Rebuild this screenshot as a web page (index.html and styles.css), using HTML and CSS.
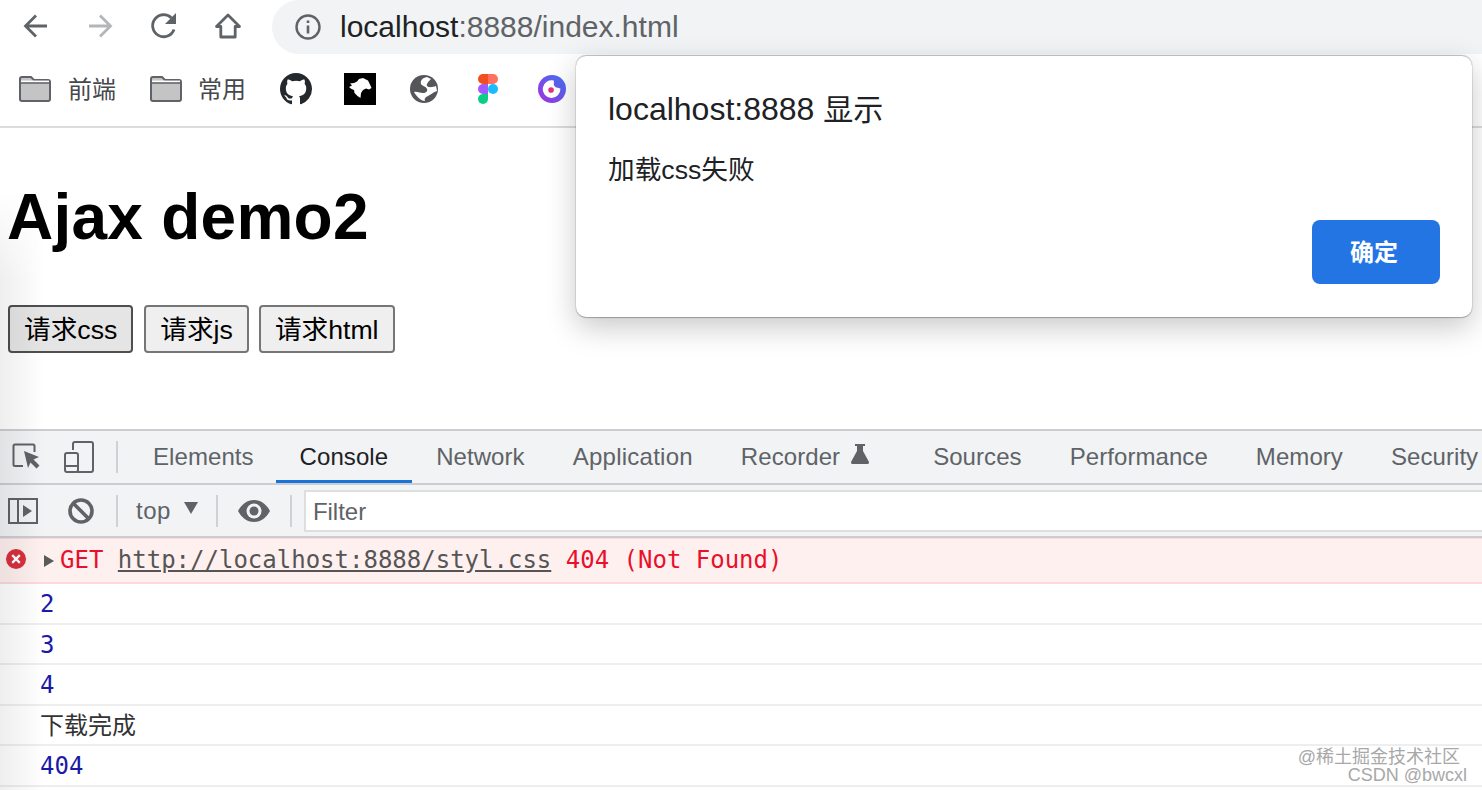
FILE: index.html
```html
<!DOCTYPE html>
<html lang="zh">
<head>
<meta charset="utf-8">
<title>Ajax demo2</title>
<link rel="stylesheet" href="styles.css">
</head>
<body>
<div class="browser">
  <header class="toolbar">
    <svg class="nav nav-back" viewBox="0 0 28 28"><path d="M25 14H4M14 3.500 3.500 14 14 24.500" fill="none" stroke="#5f6368" stroke-width="2.800"/></svg>
    <svg class="nav nav-fwd" viewBox="0 0 28 28"><path d="M3 14h21M14 3.500 24.500 14 14 24.500" fill="none" stroke="#b4b6b9" stroke-width="2.800"/></svg>
    <svg class="nav nav-reload" viewBox="0 0 28 28"><path d="M24 17.500A11 11 0 1 1 21.500 6" fill="none" stroke="#5f6368" stroke-width="2.800"/><path d="M26 1v11H15z" fill="#5f6368"/></svg>
    <svg class="nav nav-home" viewBox="0 0 28 28"><path d="M14 3 2.500 14.500h4.300V25h14.400V14.500h4.300z" fill="none" stroke="#5f6368" stroke-width="2.800" stroke-linejoin="round"/></svg>
    <div class="omnibox">
      <svg class="info" viewBox="0 0 28 28"><circle cx="14" cy="14" r="11.500" fill="none" stroke="#5f6368" stroke-width="2.400"/><path d="M12.700 12.500h2.600v8h-2.600zM12.700 7.500h2.600v2.600h-2.600z" fill="#5f6368"/></svg>
      <span class="url">localhost<span class="url-rest">:8888/index.html</span></span>
    </div>
  </header>

  <nav class="bookmarks">
    <div class="mark mark-folder">
      <svg class="folder" viewBox="0 0 32 26"><path d="M1 3q0-2 2-2h9l3 3h14q2 0 2 2v17q0 2-2 2H3q-2 0-2-2z" fill="#c4c4c4" stroke="#5f6368" stroke-width="2"/><path d="M1 7h30" stroke="#5f6368" stroke-width="1.500"/><path d="M2 5.300h28" stroke="#fff" stroke-width="1.500"/></svg>
      <span class="mark-label">前端</span>
    </div>
    <div class="mark mark-folder">
      <svg class="folder" viewBox="0 0 32 26"><path d="M1 3q0-2 2-2h9l3 3h14q2 0 2 2v17q0 2-2 2H3q-2 0-2-2z" fill="#c4c4c4" stroke="#5f6368" stroke-width="2"/><path d="M1 7h30" stroke="#5f6368" stroke-width="1.500"/><path d="M2 5.300h28" stroke="#fff" stroke-width="1.500"/></svg>
      <span class="mark-label">常用</span>
    </div>
    <svg class="fav fav-github" viewBox="0 0 16 16"><path fill="#24292e" d="M8 0C3.580 0 0 3.580 0 8c0 3.540 2.290 6.530 5.470 7.590.4.070.55-.17.55-.38 0-.19-.01-.82-.01-1.490-2.010.37-2.530-.49-2.690-.94-.09-.23-.48-.94-.82-1.130-.28-.15-.68-.52-.01-.53.63-.01 1.080.58 1.230.82.72 1.210 1.870.87 2.330.66.07-.52.28-.87.51-1.070-1.780-.2-3.640-.89-3.640-3.950 0-.87.31-1.590.82-2.150-.08-.2-.36-1.020.08-2.120 0 0 .67-.21 2.200.82.64-.18 1.320-.27 2-.27.68 0 1.360.09 2 .27 1.530-1.040 2.200-.82 2.200-.82.44 1.100.16 1.920.08 2.120.51.56.82 1.270.82 2.150 0 3.070-1.870 3.750-3.650 3.950.29.25.54.73.54 1.480 0 1.070-.01 1.930-.01 2.200 0 .21.15.46.55.38A8.013 8.013 0 0 0 16 8c0-4.420-3.580-8-8-8z"/></svg>
    <svg class="fav fav-lion" viewBox="0 0 32 32"><rect width="32" height="32" fill="#000"/><path d="M5 14l3-1.500-2-2 4-.5 3-1.500 2-2.500 4-1 5 2.500 2 4 1.500 3.500-2.500 1.500-3-1-3 1.500-2 3-.5 5-3-2-3-3-.5-3-2.500-1z" fill="#fff"/></svg>
    <svg class="fav fav-globe" viewBox="0 0 28 28"><circle cx="14" cy="14" r="14" fill="#54565a"/><path d="M17 2c-5 1-7 4-6 7 1 2 5 2 6 5 1 2-1 4-4 4-3 0-6-2-9-1 2 4 7 9 11 9-1-2 0-4 3-5 4-2 5-4 9-5l-1-5c-3 1-7 2-9 0-1-2 2-5 4-7z" fill="#fff"/></svg>
    <svg class="fav fav-figma" viewBox="0 0 20 30"><path d="M5 0h5v10H5a5 5 0 0 1 0-10z" fill="#f24e1e"/><path d="M10 0h5a5 5 0 0 1 0 10h-5z" fill="#ff7262"/><path d="M5 10h5v10H5a5 5 0 0 1 0-10z" fill="#a259ff"/><circle cx="15" cy="15" r="5" fill="#1abcfe"/><path d="M5 20h5v5a5 5 0 1 1-5-5z" fill="#0acf83"/></svg>
    <svg class="fav fav-orbit" viewBox="0 0 30 30"><defs><linearGradient id="orbit" x1="0" y1="1" x2="1" y2="0"><stop offset="0" stop-color="#a62ee0"/><stop offset="1" stop-color="#3a78f2"/></linearGradient></defs><circle cx="15" cy="15" r="15" fill="url(#orbit)"/><path d="M17 6a9.500 9.500 0 1 0 7 8.500l-5-1.500-2-2z" fill="#fff"/><circle cx="14" cy="16" r="3" fill="#e0327c"/></svg>
  </nav>

  <main class="page">
    <h1 class="title">Ajax demo2</h1>
    <div class="buttons">
      <button class="btn btn-focus" type="button">请求css</button>
      <button class="btn" type="button">请求js</button>
      <button class="btn btn-last" type="button">请求html</button>
    </div>
  </main>

  <section class="devtools">
    <div class="tabbar">
      <svg class="dt-icon dt-inspect" viewBox="0 0 30 28"><path d="M11 23H3q-1.500 0-1.500-1.500V3Q1.500 1.500 3 1.500h18q1.500 0 1.500 1.500v6" fill="none" stroke="#5f6368" stroke-width="2"/><path d="M12 8l15 6-5.500 2.500 6 6-3 3-6-6L16 25z" fill="#5f6368"/></svg>
      <svg class="dt-icon dt-device" viewBox="0 0 30 32"><path d="M9 9V3q0-2 2-2h16q2 0 2 2v26q0 2-2 2H13" fill="none" stroke="#5f6368" stroke-width="2"/><rect x="1" y="12" width="13" height="19" rx="2" fill="none" stroke="#5f6368" stroke-width="2"/><path d="M2 25h11" stroke="#5f6368" stroke-width="2"/></svg>
      <i class="sep sep-tab"></i>
      <span class="tab tab-first">Elements</span>
      <span class="tab tab-active">Console</span>
      <span class="tab">Network</span>
      <span class="tab tab-wide">Application</span>
      <span class="tab tab-flask">Recorder
        <svg class="flask" viewBox="0 0 20 20"><path d="M5 0h10v2h-2v5l6 11q.5 2-1.500 2h-15q-2 0-1.500-2L7 7V2H5z" fill="#5f6368"/></svg>
      </span>
      <span class="tab">Sources</span>
      <span class="tab">Performance</span>
      <span class="tab">Memory</span>
      <span class="tab">Security</span>
    </div>

    <div class="consolebar">
      <svg class="dt-icon dt-side" viewBox="0 0 30 26"><rect x="1" y="1" width="28" height="24" fill="none" stroke="#5f6368" stroke-width="2"/><path d="M10 1v24" stroke="#5f6368" stroke-width="2"/><path d="M15 7l9 6-9 6z" fill="#5f6368"/></svg>
      <svg class="dt-icon dt-ban" viewBox="0 0 26 26"><circle cx="13" cy="13" r="11" fill="none" stroke="#5f6368" stroke-width="3.600"/><path d="M5 5l16 16" stroke="#5f6368" stroke-width="3.600"/></svg>
      <i class="sep sep-ban"></i>
      <span class="context">top</span>
      <i class="caret"></i>
      <i class="sep sep-ctx"></i>
      <svg class="dt-icon dt-eye" viewBox="0 0 32 22"><path d="M16 0C9 0 3.500 4.500 0 11c3.500 6.500 9 11 16 11s12.500-4.500 16-11C28.500 4.500 23 0 16 0z" fill="#5f6368"/><circle cx="16" cy="11" r="7.500" fill="#f1f3f4"/><circle cx="16" cy="11" r="4.500" fill="#5f6368"/></svg>
      <i class="sep sep-eye"></i>
      <div class="filter">Filter</div>
    </div>

    <div class="log">
      <div class="row row-error">
        <svg class="err-icon" viewBox="0 0 20 20"><circle cx="10" cy="10" r="10" fill="#d9303e"/><path d="M6.200 6.200l7.600 7.600M13.800 6.200l-7.600 7.600" stroke="#fff" stroke-width="2.400"/></svg>
        <i class="expand"></i>
        <span>GET <a class="log-link">http://localhost:8888/styl.css</a> 404 (Not Found)</span>
      </div>
      <div class="row row-num">2</div>
      <div class="row row-num">3</div>
      <div class="row row-num">4</div>
      <div class="row row-text">下载完成</div>
      <div class="row row-num">404</div>
    </div>
  </section>

  <div class="edge-shade"></div>

  <div class="dialog">
    <div class="dialog-title">localhost:8888 <span class="dialog-title-cjk">显示</span></div>
    <div class="dialog-msg">加载css失败</div>
    <div class="dialog-actions"><button class="dialog-ok" type="button">确定</button></div>
  </div>

  <div class="watermark">
    <div class="wm-site">@稀土掘金技术社区</div>
    <div>CSDN @bwcxl</div>
  </div>
</div>
</body>
</html>
```

FILE: styles.css
```css
* { box-sizing: border-box; }
html, body { margin: 0; padding: 0; background: #fff; }
body { font-family: "Liberation Sans", "Noto Sans CJK SC", sans-serif; }

.browser {
  position: relative;
  width: 1482px;
  height: 790px;
  overflow: hidden;
  display: flex;
  flex-direction: column;
}

/* browser toolbar */
.toolbar { height: 55px; display: flex; align-items: flex-start; flex: none; }
.nav { flex: none; width: 28px; height: 28px; margin-top: 12px; }
.nav-back { margin-left: 22px; }
.nav-fwd { margin-left: 36px; }
.nav-reload { margin-left: 36px; }
.nav-home { margin-left: 36px; }
.omnibox {
  flex: 1;
  height: 54px;
  margin-left: 30px;
  padding-left: 22px;
  display: flex;
  align-items: center;
  background: #f1f3f4;
  border-radius: 27px 0 0 27px;
}
.info { width: 28px; height: 28px; flex: none; }
.url { margin-left: 18px; font-size: 30px; color: #202124; white-space: nowrap; }
.url-rest { color: #5f6368; }

/* bookmarks */
.bookmarks {
  height: 73px;
  flex: none;
  display: flex;
  align-items: center;
  padding: 0 0 3px 19px;
  border-bottom: 2px solid #dcdcdc;
}
.mark { display: flex; align-items: center; font-size: 24px; color: #46484c; }
.mark-folder { width: 131px; }
.mark-folder + .mark-folder { width: 130px; }
.mark-folder + .mark-folder .folder { margin-right: 16px; }
.mark-label { margin-top: -3px; }
.folder { width: 32px; height: 26px; margin-right: 17px; flex: none; }
.fav { flex: none; }
.fav-github { width: 32px; height: 32px; }
.fav-lion { width: 32px; height: 32px; margin-left: 32px; }
.fav-globe { width: 28px; height: 28px; margin-left: 34px; }
.fav-figma { width: 20px; height: 30px; margin-left: 40px; }
.fav-orbit { width: 28px; height: 28px; margin-left: 40px; }

/* page */
.page { height: 301px; flex: none; padding: 52px 8px 0; }
.title { margin: 0 0 0 -1px; font-size: 64px; line-height: 74px; font-weight: 700; letter-spacing: .25px; color: #000; }
.buttons { display: flex; gap: 11px; margin-top: 51px; }
.btn {
  height: 48px;
  padding: 0 14px 4px;
  font: 26.670px "Liberation Sans", "Noto Sans CJK SC", sans-serif;
  color: #000;
  background: #efefef;
  border: 2px solid #767676;
  border-radius: 4px;
}
.btn-focus { background: #e5e5e5; border-color: #4f4f4f; }
.btn-last { margin-left: -1px; }

/* devtools */
.devtools { flex: 1; min-height: 0; display: flex; flex-direction: column; border-top: 2px solid #cbcdd0; }
.tabbar {
  height: 54px;
  flex: none;
  display: flex;
  align-items: stretch;
  background: #f1f3f4;
  border-bottom: 2px solid #cbcdd0;
  white-space: nowrap;
}
.dt-icon { flex: none; align-self: center; }
.dt-inspect { width: 30px; height: 28px; margin-left: 12px; }
.dt-device { width: 30px; height: 32px; margin-left: 22px; }
.sep { flex: none; align-self: center; width: 2px; background: #cfd1d4; }
.sep-tab { height: 32px; margin: 0 11px 0 22px; }
.tab {
  padding: 0 24px;
  font-size: 24px;
  line-height: 52px;
  letter-spacing: .07px;
  color: #5f6368;
  flex: none;
}
.tab-first { padding-right: 22px; }
.tab-wide { letter-spacing: .25px; }
.tab-active { color: #202124; box-shadow: inset 0 -3px 0 #1a73d8; }
.tab-flask { display: flex; align-items: center; gap: 10px; padding-right: 39px; }
.flask { width: 20px; height: 20px; margin-top: -6px; }

.consolebar {
  height: 53px;
  flex: none;
  display: flex;
  align-items: center;
  background: #f1f3f4;
  border-bottom: 2px solid #cbcdd0;
}
.dt-side { width: 30px; height: 26px; margin-left: 8px; }
.dt-ban { width: 26px; height: 26px; margin-left: 30px; }
.sep-ban { height: 32px; margin: 0 18px 0 22px; }
.context { font-size: 24px; letter-spacing: .5px; color: #5f6368; }
.caret {
  width: 0; height: 0;
  margin: -6px 0 0 13px;
  border-left: 7px solid transparent;
  border-right: 7px solid transparent;
  border-top: 12px solid #5f6368;
}
.sep-ctx { height: 32px; margin: 0 20px 0 18px; }
.dt-eye { width: 32px; height: 22px; }
.sep-eye { height: 32px; margin: 0 12px 0 20px; }
.filter {
  flex: 1;
  height: 42px;
  padding-left: 7px;
  font-size: 24px;
  line-height: 40px;
  color: #5f6368;
  background: #fff;
  border: 2px solid #dcdee0;
  border-right: 0;
}

.log { flex: 1; min-height: 0; font: 24px "DejaVu Sans Mono", "Noto Sans CJK SC", monospace; }
.row {
  height: 40.500px;
  padding: 2px 0 0 40px;
  display: flex;
  align-items: center;
  border-bottom: 2px solid #eeeeee;
  white-space: pre;
}
.row-error {
  height: 46px;
  padding: 0 0 2px 6px;
  color: #e8102a;
  background: #fff0f0;
  border-top: 1px solid #fbd9dc;
  border-bottom: 2px solid #fbd9dc;
}
.err-icon { width: 20px; height: 20px; flex: none; margin: -2px 0 0; }
.expand {
  flex: none;
  width: 0; height: 0;
  margin: 2px 6px 0 18px;
  border-top: 6.500px solid transparent;
  border-bottom: 6.500px solid transparent;
  border-left: 10px solid #5a5a5a;
}
.log-link { color: #555; text-decoration: underline; }
.row-num { color: #1a1aa6; }
.row-text { padding-bottom: 4px; color: #333; font-family: "Noto Sans CJK SC", sans-serif; }

/* faint shadow along the left edge of the photographed window */
.edge-shade {
  position: absolute;
  left: 0;
  top: 190px;
  bottom: 0;
  width: 44px;
  background: linear-gradient(90deg, rgba(0, 0, 0, .065), rgba(0, 0, 0, 0));
  -webkit-mask-image: linear-gradient(180deg, transparent, #000 90px);
  mask-image: linear-gradient(180deg, transparent, #000 90px);
  pointer-events: none;
}

/* alert dialog */
.dialog {
  position: absolute;
  left: 576px;
  top: 56px;
  width: 896px;
  height: 261px;
  padding: 37px 32px 0;
  background: #fff;
  border-radius: 10px;
  box-shadow: 0 -1px 1px rgba(0, 0, 0, .2), 0 1px 1px rgba(0, 0, 0, .25), 0 0 2px rgba(0, 0, 0, .18), 0 10px 30px rgba(0, 0, 0, .22);
}
.dialog-title { font-size: 32px; line-height: 32px; color: #202124; }
.dialog-title-cjk { font-size: 30px; }
.dialog-msg { margin-top: 29px; font-size: 26.670px; line-height: 30px; color: #202124; }
.dialog-actions { display: flex; justify-content: flex-end; margin-top: 35px; }
.dialog-ok {
  width: 128px;
  height: 64px;
  padding: 0 4px 4px 0;
  font: 700 24px "Liberation Sans", "Noto Sans CJK SC", sans-serif;
  color: #fff;
  background: #2375e3;
  border: 0;
  border-radius: 8px;
}

/* watermark */
.watermark {
  position: absolute;
  right: 15px;
  top: 748px;
  font-size: 18px;
  line-height: 18px;
  color: #a8a8a8;
  text-align: right;
  text-shadow: 0 0 1px #fff;
}
.wm-site { margin-right: 7px; }
```
